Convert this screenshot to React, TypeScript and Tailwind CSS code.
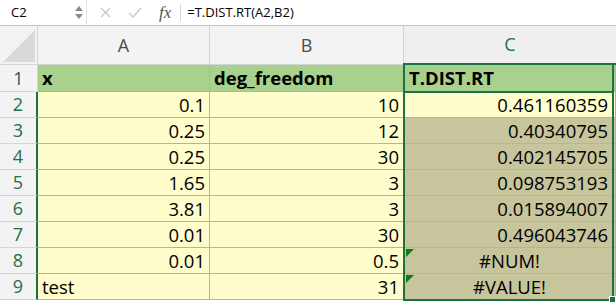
import React from "react";

const font = "font-['Open_Sans',sans-serif]";

type Row = { n: number; a: string; b: string; c: string; err?: boolean; aLeft?: boolean };

const ROWS: Row[] = [
  { n: 2, a: "0.1", b: "10", c: "0.461160359" },
  { n: 3, a: "0.25", b: "12", c: "0.40340795" },
  { n: 4, a: "0.25", b: "30", c: "0.402145705" },
  { n: 5, a: "1.65", b: "3", c: "0.098753193" },
  { n: 6, a: "3.81", b: "3", c: "0.015894007" },
  { n: 7, a: "0.01", b: "30", c: "0.496043746" },
  { n: 8, a: "0.01", b: "0.5", c: "#NUM!", err: true },
  { n: 9, a: "test", b: "31", c: "#VALUE!", err: true, aLeft: true },
];

function FormulaBar() {
  return (
    <div className="flex h-[26px] items-center border-b border-[#c4c4c4] bg-white text-[13px] text-black">
      {/* Name box */}
      <div className="flex h-full w-[87px] items-center justify-between border-r border-[#e2e2e2] pl-[11px] pr-[3px]">
        <span>C2</span>
        <div className="flex flex-col items-center gap-[3px]">
          <svg width="8" height="5" viewBox="0 0 8 5">
            <path d="M0 5 L4 0 L8 5 Z" fill="#8a8a8a" />
          </svg>
          <svg width="8" height="5" viewBox="0 0 8 5">
            <path d="M0 0 L4 5 L8 0 Z" fill="#8a8a8a" />
          </svg>
        </div>
      </div>
      <div className="flex h-full items-center gap-[17px] pl-[13px]">
        <svg width="11" height="11" viewBox="0 0 11 11">
          <path d="M1 1 L10 10 M10 1 L1 10" stroke="#c8c8c8" strokeWidth="1.4" />
        </svg>
        <svg width="14" height="11" viewBox="0 0 14 11">
          <path d="M1 6 L5 10 L13 1" stroke="#c8c8c8" strokeWidth="1.4" fill="none" />
        </svg>
        <span className="font-['Liberation_Serif',serif] text-[17px] italic text-[#555]">fx</span>
      </div>
      <div className="ml-[9px] h-[17px] w-px bg-[#d6d6d6]" />
      <span className="ml-[6px]">=T.DIST.RT(A2,B2)</span>
    </div>
  );
}

export default function App() {
  const gridLine = "border-r border-b border-[#b2b2b2]";
  return (
    <div className={`h-[304px] w-[616px] overflow-hidden bg-white ${font}`}>
      <FormulaBar />
      <div className="relative">
        <div className="grid grid-cols-[38px_172px_194px_212px] grid-rows-[39px_27px_repeat(8,26px)] text-[18.5px] text-black">
          {/* Column headers */}
          <div className="relative border-r border-b border-[#d4d4d4] bg-[#f3f3f3]">
            <svg className="absolute bottom-[2px] right-[2px]" width="32" height="32" viewBox="0 0 32 32">
              <path d="M32 0 L32 32 L0 32 Z" fill="#d9d9d9" />
            </svg>
          </div>
          <div className="flex items-center justify-center border-r border-b border-[#d4d4d4] bg-[#f3f3f3] text-[18px] text-[#4b4b4b]">A</div>
          <div className="flex items-center justify-center border-r border-b border-[#d4d4d4] bg-[#f3f3f3] text-[18px] text-[#4b4b4b]">B</div>
          <div className="flex items-center justify-center border-b-2 border-[#1e7145] bg-[#efefef] text-[18px] text-[#1e7145]">C</div>

          {/* Row 1 */}
          <div className="flex items-center justify-center border-r border-b border-[#d4d4d4] bg-[#f3f3f3] text-[18px] text-[#4b4b4b]">1</div>
          <div className={`flex items-center pl-[4px] font-bold ${gridLine} bg-[#a9d18e]`}>x</div>
          <div className={`flex items-center pl-[4px] font-bold ${gridLine} bg-[#a9d18e]`}>deg_freedom</div>
          <div className={`flex items-center pl-[5px] font-bold ${gridLine} bg-[#a9d18e]`}>T.DIST.RT</div>

          {ROWS.map((r) => (
            <React.Fragment key={r.n}>
              <div className="flex items-center justify-center border-r-2 border-b border-r-[#1e7145] border-b-[#d4d4d4] bg-[#f3f3f3] text-[18px] text-[#1e7145]">
                {r.n}
              </div>
              <div className={`flex items-center px-[4px] ${gridLine} bg-[#fffdcb] ${r.aLeft ? "justify-start" : "justify-end"}`}>
                {r.a}
              </div>
              <div className={`flex items-center justify-end px-[4px] ${gridLine} bg-[#fffdcb]`}>{r.b}</div>
              <div
                className={`relative flex items-center px-[7px] ${gridLine} ${
                  r.n === 2 ? "bg-[#fffdcb]" : "bg-[#c6c59c]"
                } ${r.err ? "justify-center" : "justify-end"}`}
              >
                {r.err && (
                  <svg className="absolute left-[2px] top-[1px]" width="8" height="8" viewBox="0 0 8 8">
                    <path d="M0 0 L8 0 L0 8 Z" fill="#0f7a17" />
                  </svg>
                )}
                {r.c}
              </div>
            </React.Fragment>
          ))}
        </div>

        {/* Selection outline */}
        <div className="pointer-events-none absolute left-[403px] top-[37px] h-[238px] w-[211px] border-2 border-[#1e7145]" />
        <div className="pointer-events-none absolute left-[403px] top-[65px] h-[2px] w-[211px] bg-[#1e7145]" />
        <div className="pointer-events-none absolute left-[609px] top-[270px] h-[7px] w-[7px] border border-white bg-[#1e7145]" />
      </div>
    </div>
  );
}
